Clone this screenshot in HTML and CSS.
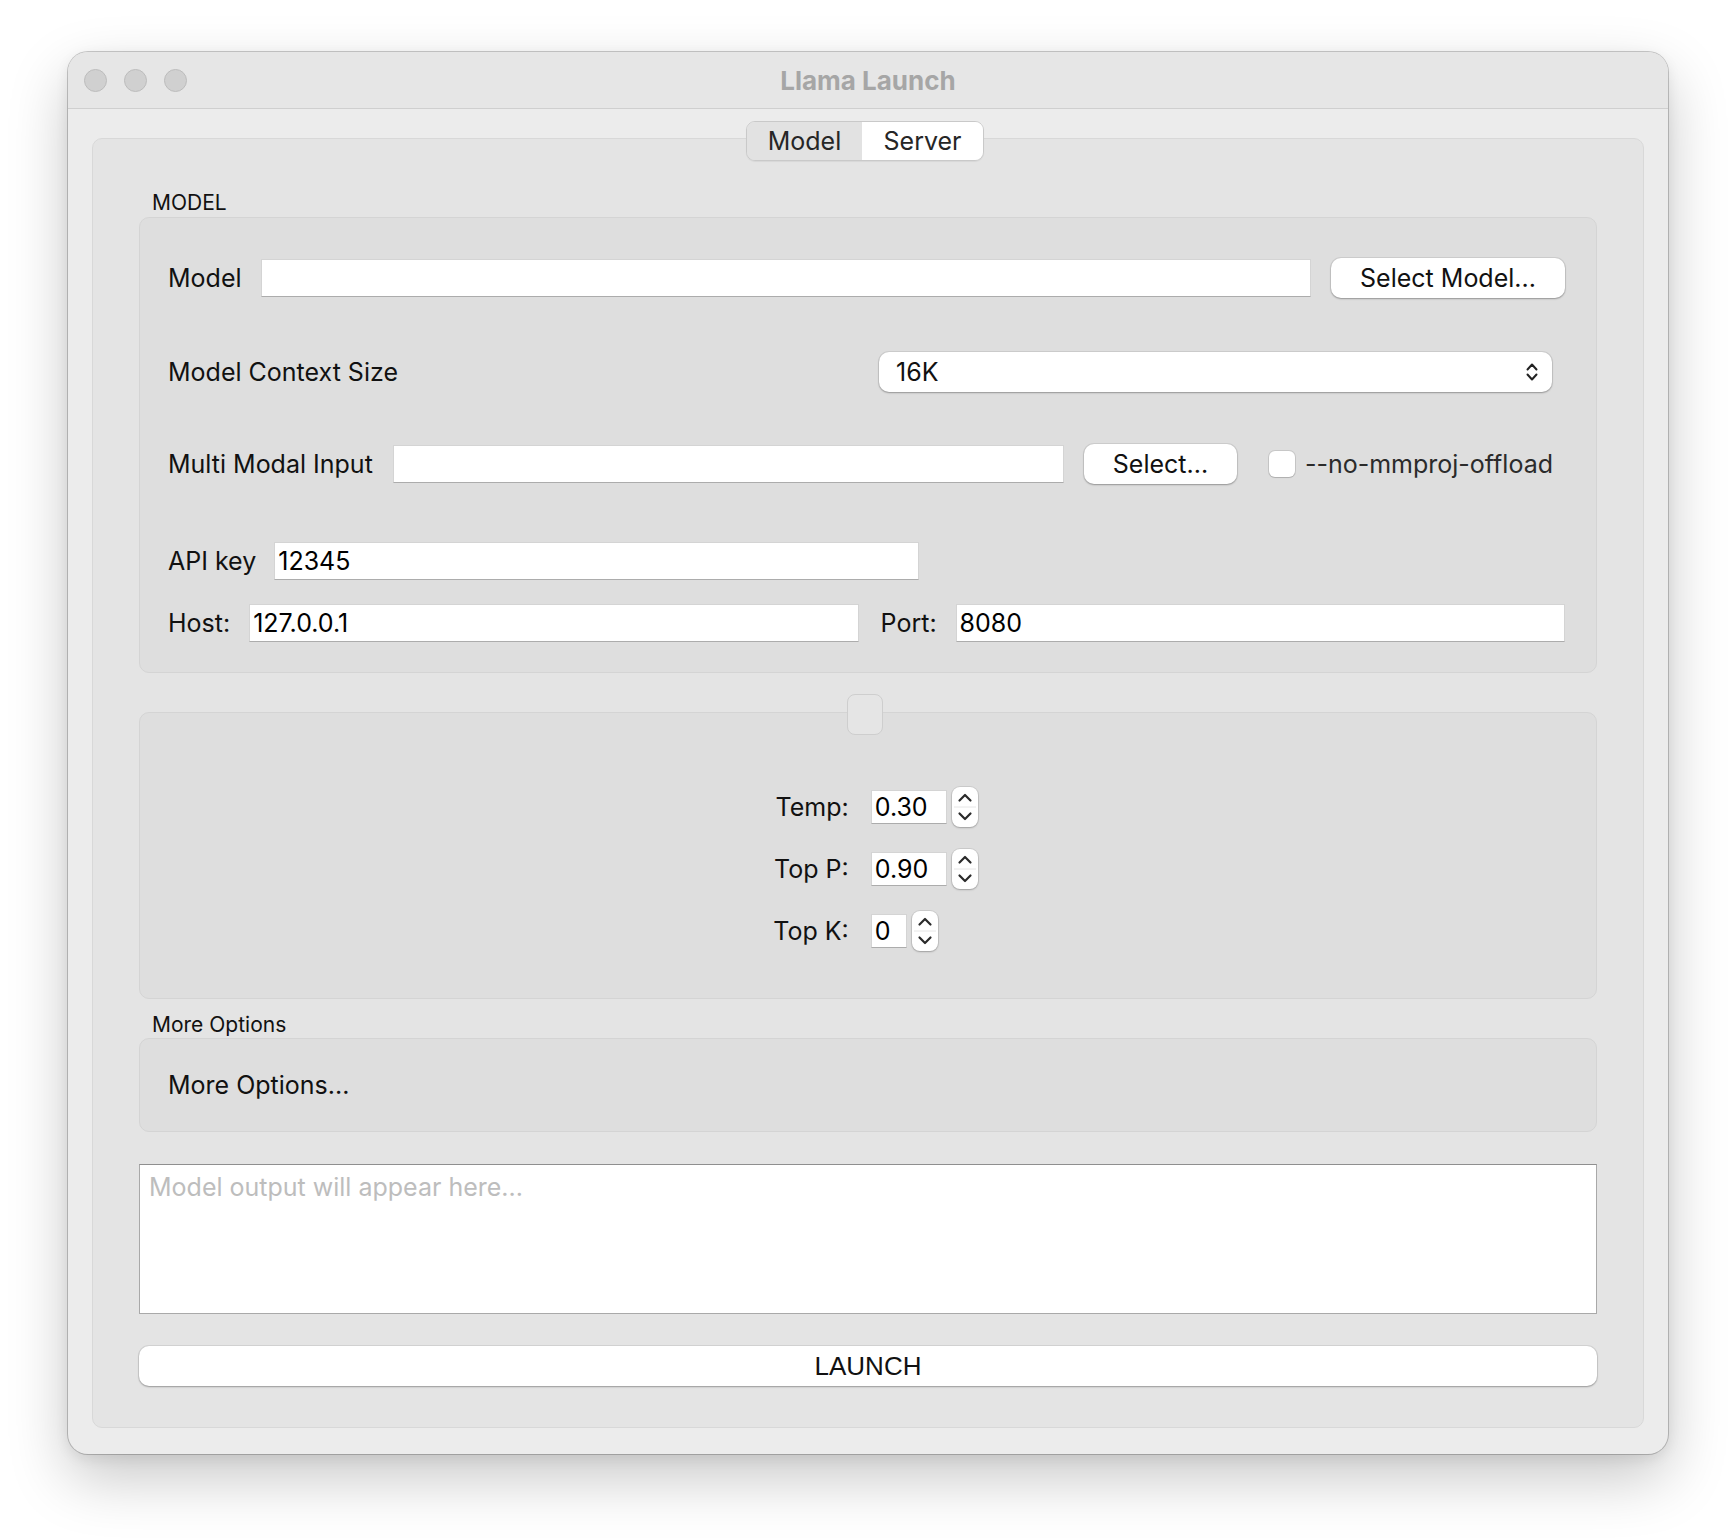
FILE: index.html
```html
<!doctype html>
<html>
<head>
<meta charset="utf-8">
<title>Llama Launch</title>
<link rel="stylesheet" href="styles.css">
</head>
<body>
<div id="window">
  <div id="titlebar">
    <div class="lights"><span></span><span></span><span></span></div>
    <div class="title">Llama Launch</div>
    <div></div>
  </div>

  <div id="content">
    <div class="tabs">
      <div class="segment">
        <span class="tab tab-model active">Model</span>
        <span class="tab tab-server">Server</span>
      </div>
    </div>

    <div id="pane">
      <div class="group-title">MODEL</div>
      <div class="group model-group">
        <div class="row r1">
          <label>Model</label>
          <input class="input grow" type="text" value="">
          <button class="btn btn-model">Select Model...</button>
        </div>
        <div class="row r2">
          <label class="grow">Model Context Size</label>
          <div class="combo">
            <span>16K</span>
            <svg width="14" height="24" viewBox="0 0 14 24"><path d="M2.5 9.5 L7 4.5 L11.5 9.5 M2.5 14.5 L7 19.5 L11.5 14.5" fill="none" stroke="#222" stroke-width="2" stroke-linecap="round" stroke-linejoin="round"/></svg>
          </div>
        </div>
        <div class="row r3">
          <label>Multi Modal Input</label>
          <input class="input grow" type="text" value="">
          <button class="btn btn-select">Select...</button>
          <span class="check"></span>
          <span class="check-label">--no-mmproj-offload</span>
        </div>
        <div class="row r4">
          <label>API key</label>
          <input class="input api" type="text" value="12345">
        </div>
        <div class="row r5">
          <label>Host:</label>
          <input class="input grow" type="text" value="127.0.0.1">
          <label class="port-label">Port:</label>
          <input class="input grow" type="text" value="8080">
        </div>
      </div>

      <div class="handle"></div>
      <div class="group sampling-group">
        <div class="form">
          <label>Temp:</label>
          <div class="spin">
            <input class="input spin-input" type="text" value="0.30">
            <span class="stepper"><svg width="26" height="40" viewBox="0 0 26 40"><path d="M2 20 H24" stroke="#e6e6e6" stroke-width="1"/><path d="M7.5 13.5 L13 8 L18.5 13.5 M7.5 26.5 L13 32 L18.5 26.5" fill="none" stroke="#2a2a2a" stroke-width="2.2" stroke-linecap="round" stroke-linejoin="round"/></svg></span>
          </div>
          <label>Top P:</label>
          <div class="spin">
            <input class="input spin-input" type="text" value="0.90">
            <span class="stepper"><svg width="26" height="40" viewBox="0 0 26 40"><path d="M2 20 H24" stroke="#e6e6e6" stroke-width="1"/><path d="M7.5 13.5 L13 8 L18.5 13.5 M7.5 26.5 L13 32 L18.5 26.5" fill="none" stroke="#2a2a2a" stroke-width="2.2" stroke-linecap="round" stroke-linejoin="round"/></svg></span>
          </div>
          <label>Top K:</label>
          <div class="spin">
            <input class="input spin-input short" type="text" value="0">
            <span class="stepper"><svg width="26" height="40" viewBox="0 0 26 40"><path d="M2 20 H24" stroke="#e6e6e6" stroke-width="1"/><path d="M7.5 13.5 L13 8 L18.5 13.5 M7.5 26.5 L13 32 L18.5 26.5" fill="none" stroke="#2a2a2a" stroke-width="2.2" stroke-linecap="round" stroke-linejoin="round"/></svg></span>
          </div>
        </div>
      </div>

      <div class="group-title more-title">More Options</div>
      <div class="group more-group">More Options...</div>

      <textarea class="output" placeholder="Model output will appear here..."></textarea>

      <button class="btn launch">LAUNCH</button>
    </div>
  </div>
</div>
</body>
</html>
```

FILE: styles.css
```css
html, body { margin:0; padding:0; }
body {
  background:#fff;
  font-family:"Inter", "Liberation Sans", sans-serif;
  font-size:25px;
  color:#111;
  padding:52px 0 84px 68px;
}
input, button, textarea { font:inherit; color:inherit; }
label { white-space:nowrap; }

#window {
  width:1600px;
  height:1402px;
  box-sizing:border-box;
  background:#ececec;
  border-radius:20px;
  overflow:hidden;
  box-shadow:0 0 0 1px rgba(0,0,0,0.2), 0 24px 60px rgba(0,0,0,0.22), 0 4px 14px rgba(0,0,0,0.08);
}

#titlebar {
  display:grid;
  grid-template-columns:1fr auto 1fr;
  align-items:center;
  height:56px;
  background:#e6e6e6;
  border-bottom:1px solid #cfcfcf;
}
.lights { display:flex; gap:17px; padding-left:16px; }
.lights span {
  width:23px; height:23px; box-sizing:border-box;
  border-radius:50%;
  background:#d0d0d0;
  border:1px solid #bcbcbc;
}
.title { font-weight:700; font-size:26px; color:#a6a6a6; }

#content { padding:12px 24px 26px; }

.tabs {
  display:flex;
  justify-content:center;
  padding-right:6px;
  margin-bottom:-23px;
  position:relative;
  z-index:1;
}
.segment {
  display:flex;
  height:40px;
  box-sizing:border-box;
  border:1px solid #c9c9c9;
  border-radius:9px;
  overflow:hidden;
  box-shadow:0 1px 1px rgba(0,0,0,0.06);
}
.tab { line-height:38px; text-align:center; background:#fff; color:#262626; }
.tab.active { background:#e2e2e2; }
.tab-model { width:115px; }
.tab-server { width:121px; }

#pane {
  display:flex;
  flex-direction:column;
  background:#e4e4e4;
  border:1px solid #d8d8d8;
  border-radius:10px;
  padding:52px 46px 41px;
}

.group-title {
  font-size:21px;
  line-height:24px;
  height:24px;
  padding-left:13px;
  margin-bottom:2px;
}
.more-title { margin-top:14px; margin-bottom:1px; }

.group {
  background:#dedede;
  border:1px solid #d4d4d4;
  border-radius:10px;
  box-sizing:border-box;
}

.model-group {
  display:flex;
  flex-direction:column;
  height:456px;
  padding:40px 31px 29px 28px;
}
.row { display:flex; align-items:center; height:40px; }
.grow { flex:1; min-width:0; }
.r1 { gap:19px; }
.r1 .btn { margin-left:1px; }
.r2 { margin-top:54px; }
.r3 { margin-top:52px; gap:20px; }
.r4 { margin-top:57px; gap:18px; }
.r5 { margin-top:22px; gap:19px; }
.r5 .port-label { margin-left:3px; }

.input {
  height:38px;
  box-sizing:border-box;
  background:#fff;
  border:1px solid #d4d4d4;
  border-bottom-color:#acacac;
  border-radius:0;
  padding:0 3px;
  outline:none;
  color:#000;
}
.api { width:645px; }

.btn {
  height:40px;
  box-sizing:border-box;
  background:#fff;
  border:0;
  border-radius:10px;
  color:#111;
  box-shadow:0 0 0 1px rgba(0,0,0,0.07), 0 1px 2px rgba(0,0,0,0.28);
  padding:0;
}
.btn-model { width:234px; }
.btn-select { width:153px; }

.combo {
  width:673px;
  height:40px;
  margin-right:13px;
  box-sizing:border-box;
  display:flex;
  align-items:center;
  justify-content:space-between;
  padding:0 13px 0 17px;
  background:#fff;
  border-radius:10px;
  box-shadow:0 0 0 1px rgba(0,0,0,0.07), 0 1px 2px rgba(0,0,0,0.28);
}
.combo svg { display:block; }

.check {
  width:26px; height:26px;
  box-sizing:border-box;
  margin-left:12px;
  background:#fff;
  border-radius:6px;
  box-shadow:0 0 0 1px rgba(0,0,0,0.1), 0 1px 1px rgba(0,0,0,0.12);
}
.check-label { margin-left:-10px; margin-right:12px; color:#2b2b2b; }

.handle {
  align-self:center;
  width:36px;
  height:41px;
  margin:21px 6px -23px 0;
  box-sizing:border-box;
  background:#e5e5e5;
  border:1px solid #cecece;
  border-radius:8px;
  position:relative;
  z-index:1;
}
.sampling-group { height:287px; padding-top:74px; }
.form {
  display:grid;
  grid-template-columns:auto auto;
  column-gap:22px;
  row-gap:22px;
  justify-content:center;
  align-items:center;
  padding-left:15px;
}
.form label { text-align:right; }
.spin { display:flex; align-items:center; gap:5px; height:40px; }
.spin-input { width:76px; height:34px; }
.spin-input.short { width:36px; }
.stepper {
  width:26px; height:40px;
  background:#fff;
  border-radius:8px;
  box-shadow:0 0 0 1px rgba(0,0,0,0.08), 0 1px 2px rgba(0,0,0,0.22);
}
.stepper svg { display:block; }

.more-group {
  height:94px;
  display:flex;
  align-items:center;
  padding-left:28px;
}

.output {
  margin-top:32px;
  height:150px;
  box-sizing:border-box;
  resize:none;
  background:#fff;
  border:1px solid #a9a9a9;
  border-top-color:#8f8f8f;
  border-radius:0;
  padding:7px 9px;
  outline:none;
}
.output::placeholder { color:#bdbdbd; }

.launch {
  margin-top:32px;
  width:100%;
  font-family:"Liberation Sans", Arial, sans-serif;
  font-size:26px;
}
```
